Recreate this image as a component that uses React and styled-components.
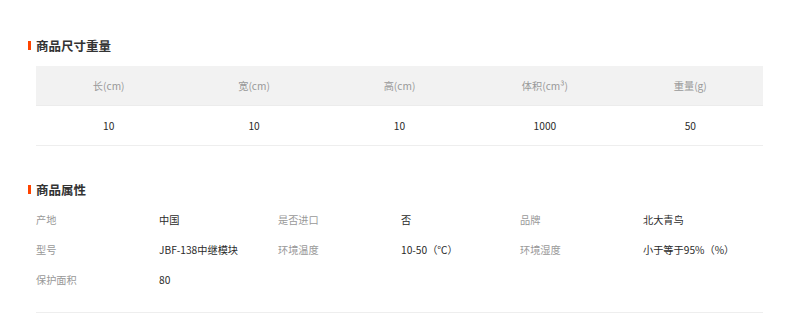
import React from "react";
import styled, { createGlobalStyle } from "styled-components";

const Global = createGlobalStyle`
  html, body { margin: 0; padding: 0; background: #fff; }
  body { font-family: "Noto Sans CJK SC", "Liberation Sans", sans-serif; font-size: 10.2px; color: #333; }
`;

const Page = styled.div`
  width: 800px;
  padding: 35px 37px 0 28px;
  box-sizing: border-box;
`;

const Section = styled.section`
  margin-bottom: ${(p) => p.$mb || 0}px;
`;

const Title = styled.h3`
  margin: 0;
  display: flex;
  align-items: center;
  gap: 5px;
  height: 20px;
  font-size: 12.5px;
  font-weight: bold;
  color: #333;
  &::before {
    content: "";
    width: 3px;
    height: 9px;
    background: #ff4400;
  }
`;

const Body = styled.div`
  margin-left: 8px;
  margin-top: ${(p) => p.$mt}px;
`;

const Table = styled.div`
  display: grid;
  grid-template-columns: repeat(5, 1fr);
  border-bottom: 1px solid #eeeeee;
`;

const HeadCell = styled.div`
  height: 39px;
  background: #f2f2f2;
  border-bottom: 1px solid #ececec;
  display: flex;
  align-items: center;
  justify-content: center;
  color: #999;
`;

const Cell = styled.div`
  height: 39px;
  display: flex;
  align-items: center;
  justify-content: center;
  color: #2b2b2b;
`;

const Props = styled.div`
  display: grid;
  grid-template-columns: repeat(3, 123px 119px);
  padding-bottom: 18px;
  border-bottom: 1px solid #eeeeee;
`;

const Label = styled.div`
  height: 30px;
  display: flex;
  align-items: center;
  color: #999;
`;

const Value = styled(Label)`
  color: #2b2b2b;
`;

const heads = ["长(cm)", "宽(cm)", "高(cm)", "体积(cm³)", "重量(g)"];
const vals = ["10", "10", "10", "1000", "50"];

const props = [
  ["产地", "中国"],
  ["是否进口", "否"],
  ["品牌", "北大青鸟"],
  ["型号", "JBF-138中继模块"],
  ["环境温度", "10-50（℃）"],
  ["环境湿度", "小于等于95%（%）"],
  ["保护面积", "80"],
];

export default function App() {
  return (
    <Page>
      <Global />
      <Section $mb={33}>
        <Title>商品尺寸重量</Title>
        <Body $mt={11}>
          <Table>
            {heads.map((h) => (
              <HeadCell key={h}>{h}</HeadCell>
            ))}
            {vals.map((v, i) => (
              <Cell key={i}>{v}</Cell>
            ))}
          </Table>
        </Body>
      </Section>
      <Section>
        <Title>商品属性</Title>
        <Body $mt={5}>
          <Props>
            {props.map(([l, v]) => (
              <React.Fragment key={l}>
                <Label>{l}</Label>
                <Value>{v}</Value>
              </React.Fragment>
            ))}
          </Props>
        </Body>
      </Section>
    </Page>
  );
}
